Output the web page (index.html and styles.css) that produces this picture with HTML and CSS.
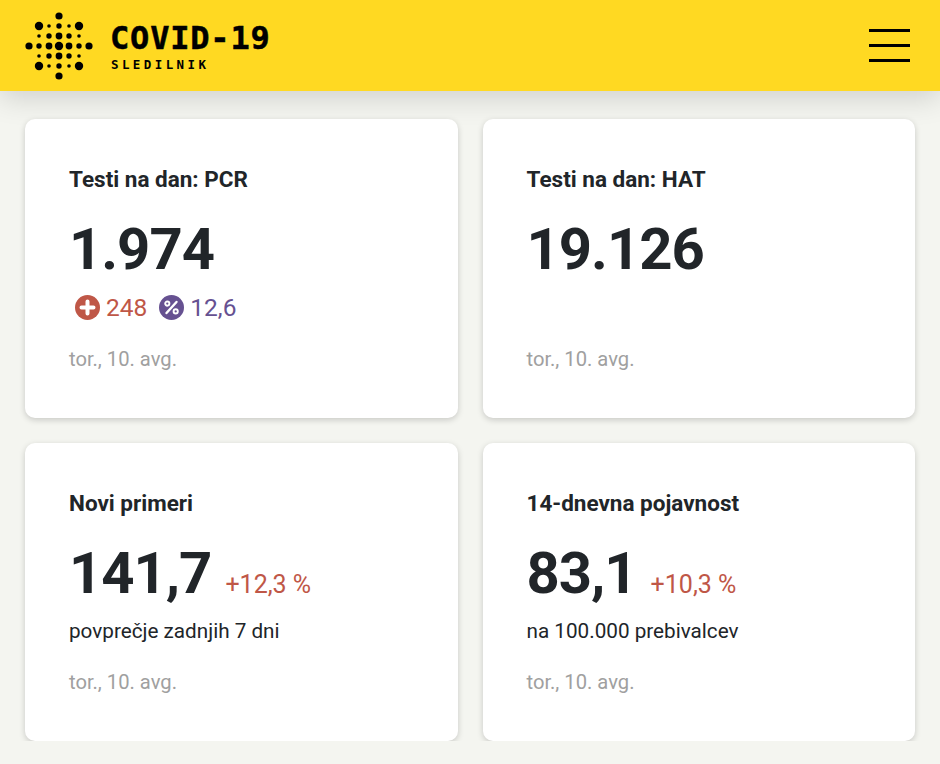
FILE: index.html
```html
<!DOCTYPE html>
<html lang="en">
<head>
    <meta charset="UTF-8">
    <title>COVID-19 Sledilnik</title>
    <link rel="stylesheet" href="styles.css">
</head>
<body>
    <!-- Header -->
    <div class="navbar">
        <div class="brand">
            <svg class="logo" width="70" height="70" viewBox="-35 -35 70 70" fill="#000">
                <circle cx="0" cy="-30" r="3.6"/>
                <circle cx="-20" cy="-20" r="4.2"/><circle cx="-10" cy="-20" r="1.8"/><circle cx="0" cy="-20" r="2.7"/><circle cx="10" cy="-20" r="1.8"/><circle cx="20" cy="-20" r="4.2"/>
                <circle cx="-20" cy="-10" r="1.8"/><circle cx="-10" cy="-10" r="2.7"/><circle cx="0" cy="-10" r="3.4"/><circle cx="10" cy="-10" r="2.7"/><circle cx="20" cy="-10" r="1.8"/>
                <circle cx="-30" cy="0" r="3.6"/><circle cx="-20" cy="0" r="2.7"/><circle cx="-10" cy="0" r="3.4"/><circle cx="0" cy="0" r="4.2"/><circle cx="10" cy="0" r="3.4"/><circle cx="20" cy="0" r="2.7"/><circle cx="30" cy="0" r="3.6"/>
                <circle cx="-20" cy="10" r="1.8"/><circle cx="-10" cy="10" r="2.7"/><circle cx="0" cy="10" r="3.4"/><circle cx="10" cy="10" r="2.7"/><circle cx="20" cy="10" r="1.8"/>
                <circle cx="-20" cy="20" r="4.2"/><circle cx="-10" cy="20" r="1.8"/><circle cx="0" cy="20" r="2.7"/><circle cx="10" cy="20" r="1.8"/><circle cx="20" cy="20" r="4.2"/>
                <circle cx="0" cy="30" r="3.6"/>
            </svg>
            <div class="brand-text">
                <div class="brand-title">COVID-19</div>
                <div class="brand-sub">SLEDILNIK</div>
            </div>
        </div>
        <div class="hamburger">
            <span></span>
            <span></span>
            <span></span>
        </div>
    </div>

    <!-- Cards -->
    <div class="cards">
        <div class="card">
            <h3>Testi na dan: PCR</h3>
            <div class="value-row"><span class="value">1.974</span></div>
            <div class="detail">
                <span class="stat red">
                    <svg class="stat-icon" width="25" height="25" viewBox="0 0 25 25">
                        <circle cx="12.5" cy="12.5" r="12.5" fill="#bf5747"/>
                        <path d="M12.5 6.5v12M6.5 12.5h12" stroke="#fff" stroke-width="4" stroke-linecap="round"/>
                    </svg>
                    248
                </span>
                <span class="stat purple">
                    <svg class="stat-icon" width="25" height="25" viewBox="0 0 25 25">
                        <circle cx="12.5" cy="12.5" r="12.5" fill="#665191"/>
                        <path d="M17.5 7l-10 11" stroke="#fff" stroke-width="2.4" stroke-linecap="round"/>
                        <circle cx="8.3" cy="8.6" r="2.1" fill="none" stroke="#fff" stroke-width="1.9"/>
                        <circle cx="16.7" cy="16.4" r="2.1" fill="none" stroke="#fff" stroke-width="1.9"/>
                    </svg>
                    12,6
                </span>
            </div>
            <div class="date">tor., 10. avg.</div>
        </div>

        <div class="card">
            <h3>Testi na dan: HAT</h3>
            <div class="value-row"><span class="value">19.126</span></div>
            <div class="detail"></div>
            <div class="date">tor., 10. avg.</div>
        </div>

        <div class="card">
            <h3>Novi primeri</h3>
            <div class="value-row"><span class="value">141,7</span><span class="change">+12,3 %</span></div>
            <div class="detail note">povprečje zadnjih 7 dni</div>
            <div class="date">tor., 10. avg.</div>
        </div>

        <div class="card">
            <h3>14-dnevna pojavnost</h3>
            <div class="value-row"><span class="value">83,1</span><span class="change">+10,3 %</span></div>
            <div class="detail note">na 100.000 prebivalcev</div>
            <div class="date">tor., 10. avg.</div>
        </div>
    </div>
</body>
</html>
```

FILE: styles.css
```css
body, html {
    margin: 0;
    padding: 0;
    box-sizing: border-box;
    font-family: Roboto, "Noto Sans", sans-serif;
    background-color: #f4f5f0;
    color: #212529;
}
.navbar {
    display: flex;
    justify-content: space-between;
    align-items: center;
    height: 91px;
    padding: 0 30px 0 24px;
    background: #ffd922;
    box-shadow: 0 6px 30px rgba(0, 0, 0, 0.16);
}
.brand {
    display: flex;
    align-items: center;
    gap: 16px;
}
.logo {
    display: block;
}
.brand-text {
    padding-top: 1px;
    font-family: "DejaVu Sans Mono", monospace;
    font-weight: bold;
    color: #000;
}
.brand-title {
    font-size: 32px;
    line-height: 37px;
    letter-spacing: 0.8px;
    -webkit-text-stroke: 0.5px #000;
}
.brand-sub {
    font-size: 12.5px;
    line-height: 15px;
    letter-spacing: 3.4px;
    margin-left: 1px;
}
.hamburger {
    display: flex;
    flex-direction: column;
    gap: 12px;
    padding-bottom: 1px;
}
.hamburger span {
    display: block;
    width: 41px;
    height: 3px;
    background: #000;
}
.cards {
    display: grid;
    grid-template-columns: 1fr 1fr;
    grid-template-rows: 299px 298px;
    gap: 25px;
    padding: 28px 25px 0;
}
.card {
    background: #ffffff;
    border-radius: 10px;
    padding: 44px 44px 0;
    box-sizing: border-box;
    box-shadow: 0 2px 6px rgba(0, 0, 0, 0.18);
}
.card h3 {
    margin: 0;
    font-size: 22.5px;
    line-height: 32px;
    font-weight: 700;
}
.value-row {
    display: flex;
    align-items: baseline;
    gap: 14px;
    margin-top: 18px;
    height: 72px;
}
.value {
    font-size: 58px;
    line-height: 72px;
    font-weight: 700;
    letter-spacing: -1px;
}
.change {
    font-size: 25px;
    color: #bf5747;
}
.detail {
    display: flex;
    align-items: center;
    gap: 12px;
    height: 34px;
    margin-top: 5px;
    font-size: 20.7px;
}
.note {
    margin-bottom: -1px;
}
.stat {
    display: flex;
    align-items: center;
    gap: 6px;
    font-size: 24.5px;
}
.stat-icon {
    display: block;
    margin-left: 6px;
}
.stat.purple .stat-icon {
    margin-left: 0;
}
.red {
    color: #bf5747;
}
.purple {
    color: #665191;
}
.date {
    margin-top: 19px;
    font-size: 20.2px;
    line-height: 32px;
    color: #a0a0a0;
}
```
